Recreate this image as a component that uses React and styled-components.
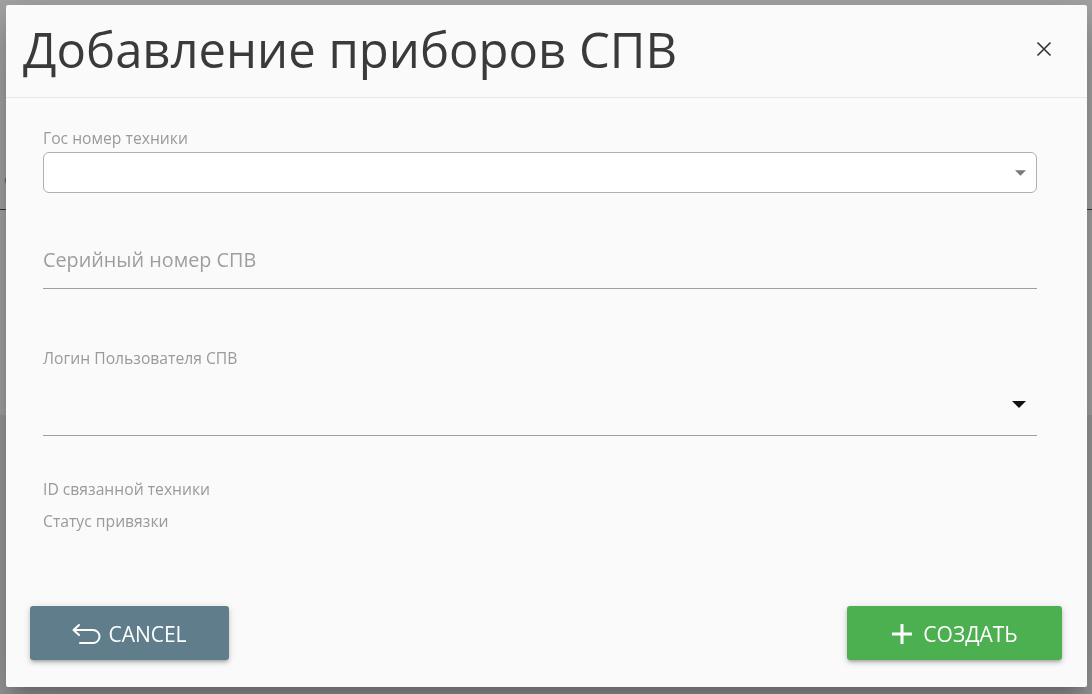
import React from "react";
import styled, { createGlobalStyle } from "styled-components";

const Global = createGlobalStyle`
  html, body { margin: 0; padding: 0; height: 100%; }
  body { font-family: "Open Sans", "Liberation Sans", sans-serif; overflow: hidden; background: #eeeeee; }
  * { box-sizing: border-box; }
`;

const Page = styled.div`
  width: 1092px;
  height: 694px;
  display: flex;
  flex-direction: column;
  background: #eeeeee;
`;

const PageTop = styled.div`
  height: 415px;
  background: #ffffff;
  display: flex;
  flex-direction: column;
`;

const PageHeader = styled.div`
  height: 150px;
  padding: 52px 0 0 0;
`;

const PageSearch = styled.div`
  height: 60px;
  border-bottom: 1px solid #555;
  padding: 18px 0 0 4px;
  color: #999;
  font-size: 16px;
`;

const Overlay = styled.div`
  position: fixed;
  inset: 0;
  background: rgba(0, 0, 0, 0.36);
`;

const Modal = styled.div`
  position: fixed;
  left: 6px;
  top: 5px;
  width: 1081px;
  height: 682px;
  background: #fafafa;
  border-radius: 2px;
  display: flex;
  flex-direction: column;
  box-shadow: 0 11px 15px -7px rgba(0, 0, 0, 0.2), 0 24px 38px 3px rgba(0, 0, 0, 0.14),
    0 9px 46px 8px rgba(0, 0, 0, 0.12);
`;

const Header = styled.div`
  height: 93px;
  flex: none;
  border-bottom: 1px solid #e6e6e6;
  display: flex;
  align-items: center;
  justify-content: space-between;
  padding: 0 34px 0 17px;
`;

const Title = styled.h1`
  margin: 0;
  font-family: "Open Sans", "Liberation Sans", sans-serif;
  font-weight: 400;
  font-size: 49px;
  line-height: 60px;
  color: #3a3a3a;
  margin-top: -4px;
`;

const CloseButton = styled.button`
  border: none;
  background: transparent;
  padding: 0;
  width: 18px;
  height: 18px;
  display: flex;
  align-items: center;
  justify-content: center;
  cursor: pointer;
  margin-top: -4px;
`;

const Body = styled.div`
  flex: 1;
  padding: 30px 50px 0 37px;
  display: flex;
  flex-direction: column;
`;

const Label = styled.div`
  font-size: 15.7px;
  line-height: 20px;
  color: #9a9a9a;
  margin-top: ${(p) => p.$mt || 0}px;
`;

const SelectBox = styled.div`
  margin-top: 4px;
  height: 41px;
  background: #ffffff;
  border: 1px solid #b0b0b0;
  border-radius: 6px;
  display: flex;
  align-items: center;
  justify-content: flex-end;
  padding-right: 10px;
`;

const TextField = styled.div`
  margin-top: 52px;
  padding-bottom: 13px;
  border-bottom: 1px solid #9e9e9e;
  font-size: 19.8px;
  line-height: 30px;
  color: #9e9e9e;
`;

const UnderlineSelect = styled.div`
  height: 68px;
  border-bottom: 1px solid #9e9e9e;
  display: flex;
  justify-content: flex-end;
  align-items: flex-end;
  padding: 0 11px 27px 0;
`;

const Info = styled.div`
  font-size: 15.7px;
  line-height: 32px;
  color: #9a9a9a;
  margin-top: ${(p) => p.$mt || 0}px;
`;

const Footer = styled.div`
  flex: none;
  display: flex;
  justify-content: space-between;
  padding: 0 25px 27px 24px;
`;

const Button = styled.button`
  height: 54px;
  width: ${(p) => p.$w}px;
  border: none;
  border-radius: 3px;
  background: ${(p) => p.$bg};
  color: #ffffff;
  font-family: "Open Sans", "Liberation Sans", sans-serif;
  font-size: 21px;
  display: flex;
  align-items: center;
  justify-content: center;
  gap: ${(p) => p.$gap}px;
  box-shadow: 0 3px 3px -2px rgba(0, 0, 0, 0.2), 0 3px 4px 0 rgba(0, 0, 0, 0.14),
    0 1px 8px 0 rgba(0, 0, 0, 0.12);
  cursor: pointer;
  padding: 2px 0 0;
`;

const Arrow = ({ w, h, color }) => (
  <svg width={w} height={h} viewBox="0 0 10 5">
    <path d="M0 0 L10 0 L5 5 Z" fill={color} />
  </svg>
);

export default function App() {
  return (
    <>
      <Global />
      <Page>
        <PageTop>
          <PageHeader />
          <PageSearch>c</PageSearch>
        </PageTop>
      </Page>
      <Overlay />
      <Modal>
        <Header>
          <Title>Добавление приборов СПВ</Title>
          <CloseButton aria-label="close">
            <svg width="16" height="16" viewBox="0 0 16 16">
              <path d="M1.5 1.5 L14.5 14.5 M14.5 1.5 L1.5 14.5" stroke="#333" strokeWidth="1.6" />
            </svg>
          </CloseButton>
        </Header>
        <Body>
          <Label>Гос номер техники</Label>
          <SelectBox>
            <Arrow w={11} h={6} color="#7a7a7a" />
          </SelectBox>
          <TextField>Серийный номер СПВ</TextField>
          <Label $mt={59}>Логин Пользователя СПВ</Label>
          <UnderlineSelect>
            <Arrow w={14} h={7} color="#111" />
          </UnderlineSelect>
          <Info $mt={37}>ID связанной техники</Info>
          <Info>Статус привязки</Info>
        </Body>
        <Footer>
          <Button $bg="#607d8b" $w={199} $gap={7}>
            <svg width="29" height="24" viewBox="0 0 29 24" fill="none">
              <path
                d="M7 3 L1.5 8 L7 13 M1.5 8 H21 A6.5 6.5 0 0 1 21 21 H8"
                stroke="#fff"
                strokeWidth="2"
                strokeLinecap="round"
                strokeLinejoin="round"
              />
            </svg>
            CANCEL
          </Button>
          <Button $bg="#4caf50" $w={215} $gap={10}>
            <svg width="22" height="22" viewBox="0 0 22 22">
              <path d="M11 1 V21 M1 11 H21" stroke="#fff" strokeWidth="3" />
            </svg>
            СОЗДАТЬ
          </Button>
        </Footer>
      </Modal>
    </>
  );
}
